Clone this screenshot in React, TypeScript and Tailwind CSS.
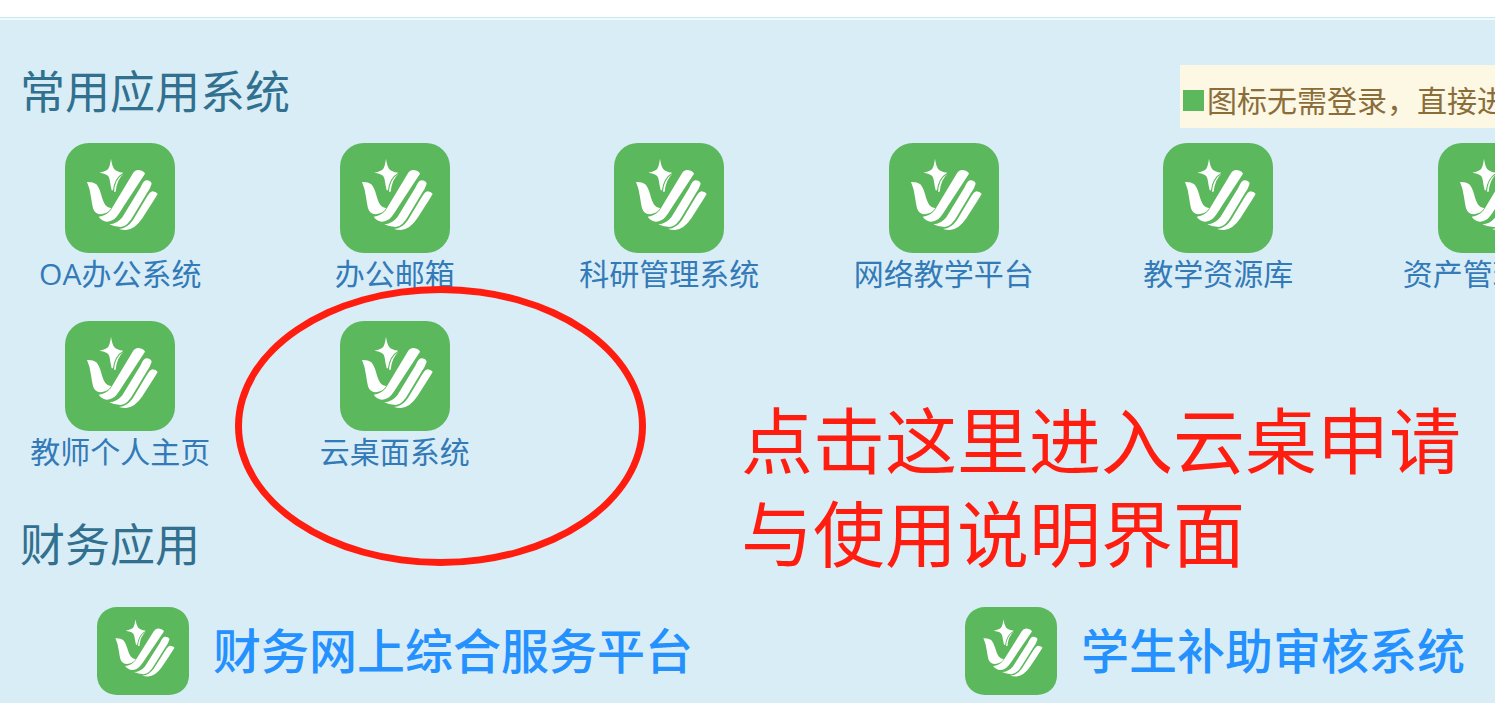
const COMMON_APPS = [
  "OA办公系统",
  "办公邮箱",
  "科研管理系统",
  "网络教学平台",
  "教学资源库",
  "资产管理系统",
  "教师个人主页",
  "云桌面系统",
];

const FINANCE_APPS = ["财务网上综合服务平台", "学生补助审核系统"];

const HIGHLIGHTED = "云桌面系统";

function AppIcon({ className }: { className: string }) {
  return (
    <svg viewBox="0 0 330 330" preserveAspectRatio="none" className={className} aria-hidden="true">
      <rect width="330" height="330" rx="72" fill="#5cb85c" />
      <g fill="#fff">
        {/* Star with its tail */}
        <path d="M138 47 Q141 68 147 77 Q154 86 175 89 Q148 104 144 142 L140 142 Q136 124 134 110 Q132 98 124 95 Q116 91 103 89 Q124 84 130 77 Q135 69 138 47Z" />
        <path d="M176 92 Q155 110 152 146 L147 146 Q149 108 176 92Z" />
        {/* Thumb */}
        <path d="M66 117 Q84 116 94 124 Q102 133 108 153 Q114 176 121 186 Q127 194 139 196 Q128 212 108 214 Q90 214 84 196 Q81 184 78 162 Q75 137 66 117Z" />
        {/* Fingers */}
        <path d="M101 221 Q122 220 137 202 Q142 194 152 177 L203 92 Q210 80 221 81 Q236 83 240 92 L176 190 Q162 213 154 222 Q143 235 126 236 Q111 235 101 221Z" />
        <path d="M133 244 Q156 243 172 223 L226 134 Q236 112 244 112 Q258 113 260 122 Q255 138 246 150 L205 218 Q188 250 167 252 Q148 252 133 244Z" />
        <path d="M162 258 Q187 256 204 231 L245 163 Q255 145 263 145 Q275 147 278 153 Q266 173 255 190 L232 226 Q210 259 183 261 Q171 261 162 258Z" />
      </g>
    </svg>
  );
}

export default function App() {
  return (
    <div className="min-h-screen overflow-hidden bg-[#d9edf7] pb-2 font-['Open_Sans','Noto_Sans_CJK_SC',sans-serif]">
      <div className="h-[18px] border-b border-[#c5e8f1] bg-white" />
      <div className="h-[2px] bg-[#f0f9fc]" />

      <section className="relative">
        <header className="flex h-[123px] items-start justify-between pt-[45px] pl-5">
          <h2 className="pt-0.5 text-[45px] leading-[50px] text-[#31708f]">常用应用系统</h2>
          <p className="flex h-[63px] w-[315px] items-center overflow-hidden bg-[#fcf8e3] pt-2 pl-[3px] text-[30px] leading-10 whitespace-nowrap text-[#8a6d3b]">
            <span className="mr-[3px] size-[21px] shrink-0 bg-[#5cb85c]" />
            图标无需登录，直接进入
          </p>
        </header>

        {/* Last column runs past the right edge */}
        <ul className="-ml-[17px] grid w-[calc(100%+152px)] grid-cols-6 gap-y-[26px]">
          {COMMON_APPS.map((name) => (
            <li key={name} className="relative">
              <a href="#" className="flex flex-col items-center">
                <AppIcon className="size-[110px]" />
                <span className="text-[30px] leading-[42px] whitespace-nowrap text-[#337ab7]">{name}</span>
              </a>
              {name === HIGHLIGHTED && (
                <div className="pointer-events-none absolute -top-[35px] -left-[23px] h-[280px] w-[411px] rounded-[50%] border-7 border-[#ff1d0f]" />
              )}
            </li>
          ))}
        </ul>

        <p className="absolute top-[374px] left-[741px] text-[72px] leading-[93px] whitespace-nowrap text-[#ff1d0f]">
          点击这里进入云桌申请
          <br />
          与使用说明界面
        </p>
      </section>

      <section className="pt-[47px]">
        <h2 className="pl-5 text-[45px] leading-[50px] text-[#31708f]">财务应用</h2>
        <ul className="mt-[37px] grid w-[calc(100%+241px)] grid-cols-2">
          {FINANCE_APPS.map((name) => (
            <li key={name} className="pl-[97px]">
              <a href="#" className="flex items-center gap-6">
                <AppIcon className="h-[88px] w-[92px]" />
                <span className="text-[48px] leading-[56px] font-medium whitespace-nowrap text-[#2491ff]">{name}</span>
              </a>
            </li>
          ))}
        </ul>
      </section>
    </div>
  );
}
